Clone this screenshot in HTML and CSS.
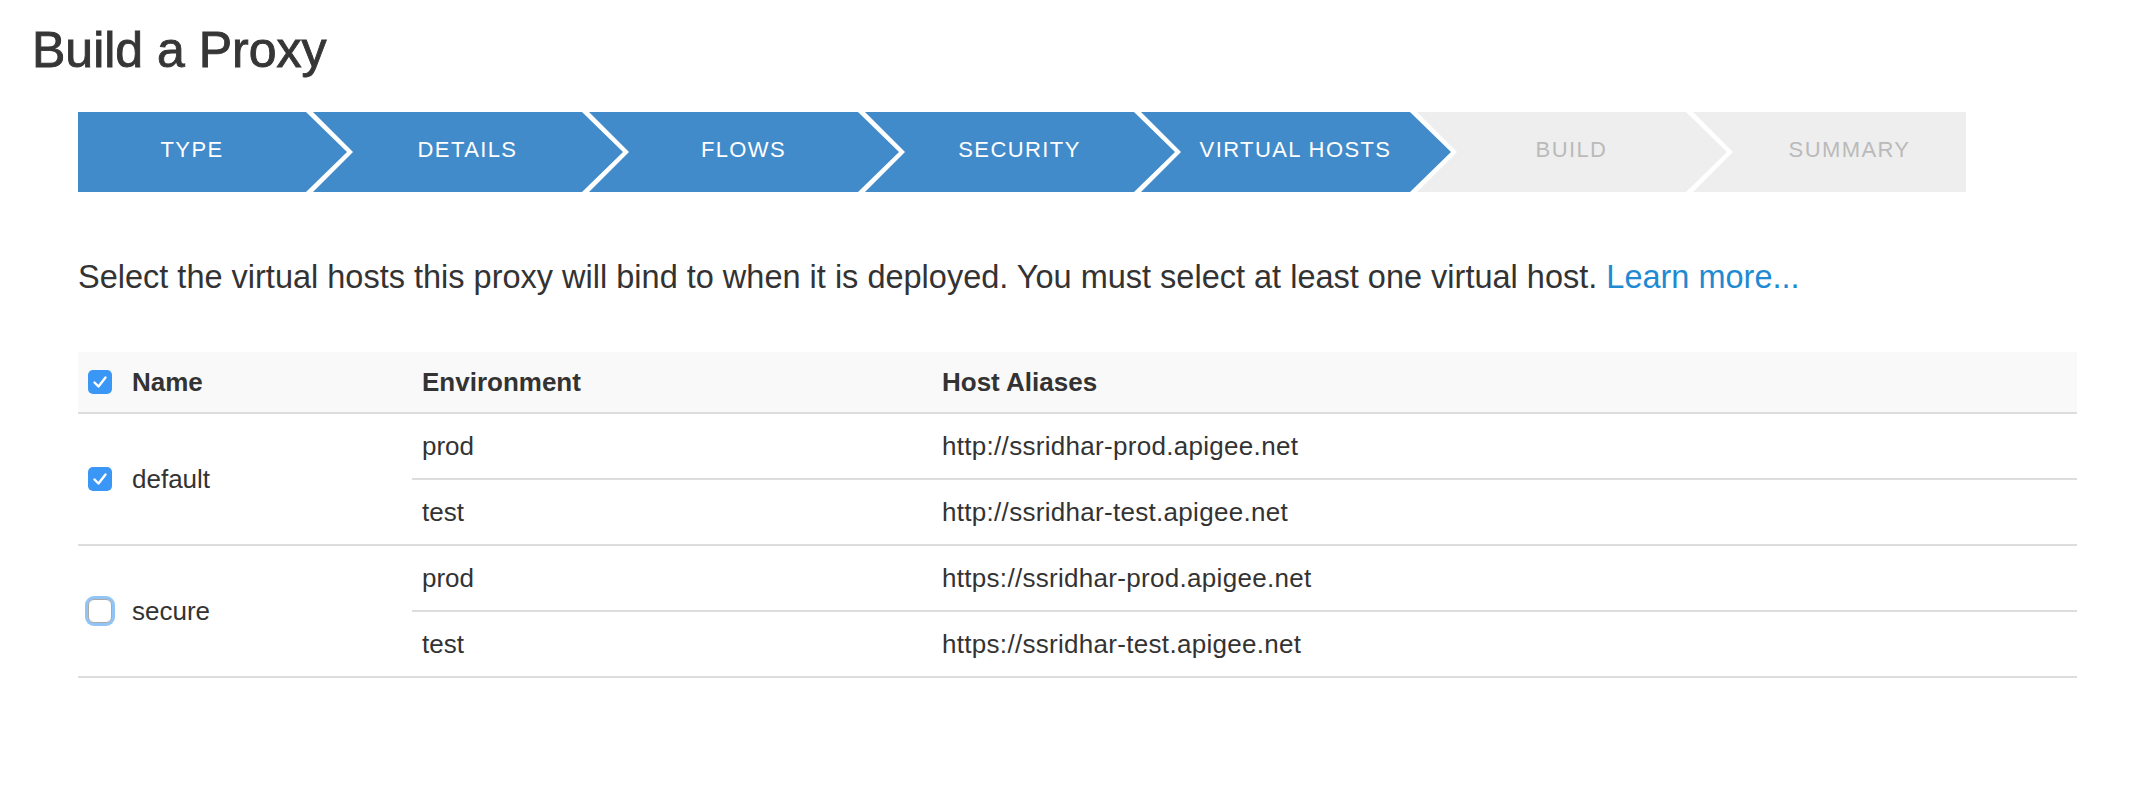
FILE: index.html
```html
<!DOCTYPE html>
<html lang="en">
<head>
<meta charset="utf-8">
<title>Build a Proxy</title>
<link rel="stylesheet" href="styles.css">
</head>
<body>
<div class="page">
  <h1 class="title">Build a Proxy</h1>
  <div class="content">
    <div class="steps">
      <div class="step done first">Type</div>
      <div class="step done">Details</div>
      <div class="step done">Flows</div>
      <div class="step done">Security</div>
      <div class="step done">Virtual Hosts</div>
      <div class="step todo">Build</div>
      <div class="step todo last">Summary</div>
    </div>
    <p class="desc">Select the virtual hosts this proxy will bind to when it is deployed. You must select at least one virtual host. <a class="link" href="#">Learn more...</a></p>
    <table class="hosts">
      <colgroup>
        <col class="c-name">
        <col class="c-env">
        <col class="c-host">
      </colgroup>
      <thead>
        <tr>
          <th><span class="name-cell"><span class="cb checked"><svg viewBox="0 0 24 24" width="24" height="24"><path d="M6.5 12.5 L10.5 16.5 L17.5 7.5" fill="none" stroke="#fff" stroke-width="2.4" stroke-linecap="round" stroke-linejoin="round"/></svg></span>Name</span></th>
          <th>Environment</th>
          <th>Host Aliases</th>
        </tr>
      </thead>
      <tbody>
        <tr>
          <td rowspan="2" class="group"><span class="name-cell"><span class="cb checked"><svg viewBox="0 0 24 24" width="24" height="24"><path d="M6.5 12.5 L10.5 16.5 L17.5 7.5" fill="none" stroke="#fff" stroke-width="2.4" stroke-linecap="round" stroke-linejoin="round"/></svg></span>default</span></td>
          <td>prod</td>
          <td class="url">http://ssridhar-prod.apigee.net</td>
        </tr>
        <tr>
          <td>test</td>
          <td class="url">http://ssridhar-test.apigee.net</td>
        </tr>
        <tr>
          <td rowspan="2" class="group"><span class="name-cell"><span class="cb focus"></span>secure</span></td>
          <td>prod</td>
          <td class="url">https://ssridhar-prod.apigee.net</td>
        </tr>
        <tr>
          <td>test</td>
          <td class="url">https://ssridhar-test.apigee.net</td>
        </tr>
      </tbody>
    </table>
  </div>
</div>
</body>
</html>
```
FILE: styles.css
```css
html, body {
  margin: 0;
  padding: 0;
  background: #ffffff;
}

body {
  font-family: "Liberation Sans", Arial, Helvetica, sans-serif;
  color: #333333;
}

.page {
  padding: 23px 32px 40px 32px;
}

.title {
  margin: 0;
  font-size: 50px;
  line-height: 55px;
  font-weight: normal;
  color: #363636;
  -webkit-text-stroke: 0.9px #363636;
}

.content {
  margin-left: 46px;
}

.steps {
  display: flex;
  margin-top: 34px;
  width: 1888px;
  height: 80px;
}

.step {
  box-sizing: border-box;
  height: 80px;
  width: 310px;
  margin-left: -34px;
  padding: 0 41px 5px 40px;
  display: flex;
  align-items: center;
  justify-content: center;
  font-size: 22px;
  letter-spacing: 1.4px;
  text-transform: uppercase;
  clip-path: polygon(0 0, calc(100% - 41px) 0, 100% 50%, calc(100% - 41px) 100%, 0 100%, 40px 50%);
}

.step.first {
  width: 269px;
  margin-left: 0;
  padding: 0 41px 5px 0;
  clip-path: polygon(0 0, calc(100% - 41px) 0, 100% 50%, calc(100% - 41px) 100%, 0 100%);
}

.step.last {
  width: 273px;
  padding: 0 0 5px 40px;
  clip-path: polygon(0 0, 100% 0, 100% 100%, 0 100%, 40px 50%);
}

.step.done {
  background: #428bca;
  color: #ffffff;
}

.step.todo {
  background: #eeeeee;
  color: #bababa;
}

.desc {
  margin: 65px 0 0 0;
  font-size: 32.5px;
  line-height: 40px;
  color: #333333;
}

.link {
  color: #1f8ad2;
  text-decoration: none;
}

.hosts {
  margin-top: 55px;
  width: 1999px;
  border-collapse: separate;
  border-spacing: 0;
  table-layout: fixed;
  font-size: 26px;
}

.c-name { width: 334px; }
.c-env { width: 520px; }

.hosts th {
  text-align: left;
  font-weight: bold;
  background: #f9f9f9;
  padding: 15px 10px;
  line-height: 30px;
  border-bottom: 2px solid #dddddd;
}

.hosts td {
  padding: 17px 10px;
  line-height: 30px;
  border-bottom: 2px solid #dddddd;
  vertical-align: middle;
}

.hosts td.url {
  letter-spacing: 0.3px;
}

.name-cell {
  display: flex;
  align-items: center;
  gap: 20px;
}

.cb {
  box-sizing: border-box;
  width: 24px;
  height: 24px;
  border-radius: 5px;
  flex: none;
  display: block;
}

.cb svg {
  display: block;
}

.cb.checked {
  background: #3a97f6;
}

.cb.focus {
  background: #ffffff;
  border: 1px solid #a9a9a9;
  box-shadow: 0 0 0 3px #92c4f6;
  border-radius: 6px;
}
```
